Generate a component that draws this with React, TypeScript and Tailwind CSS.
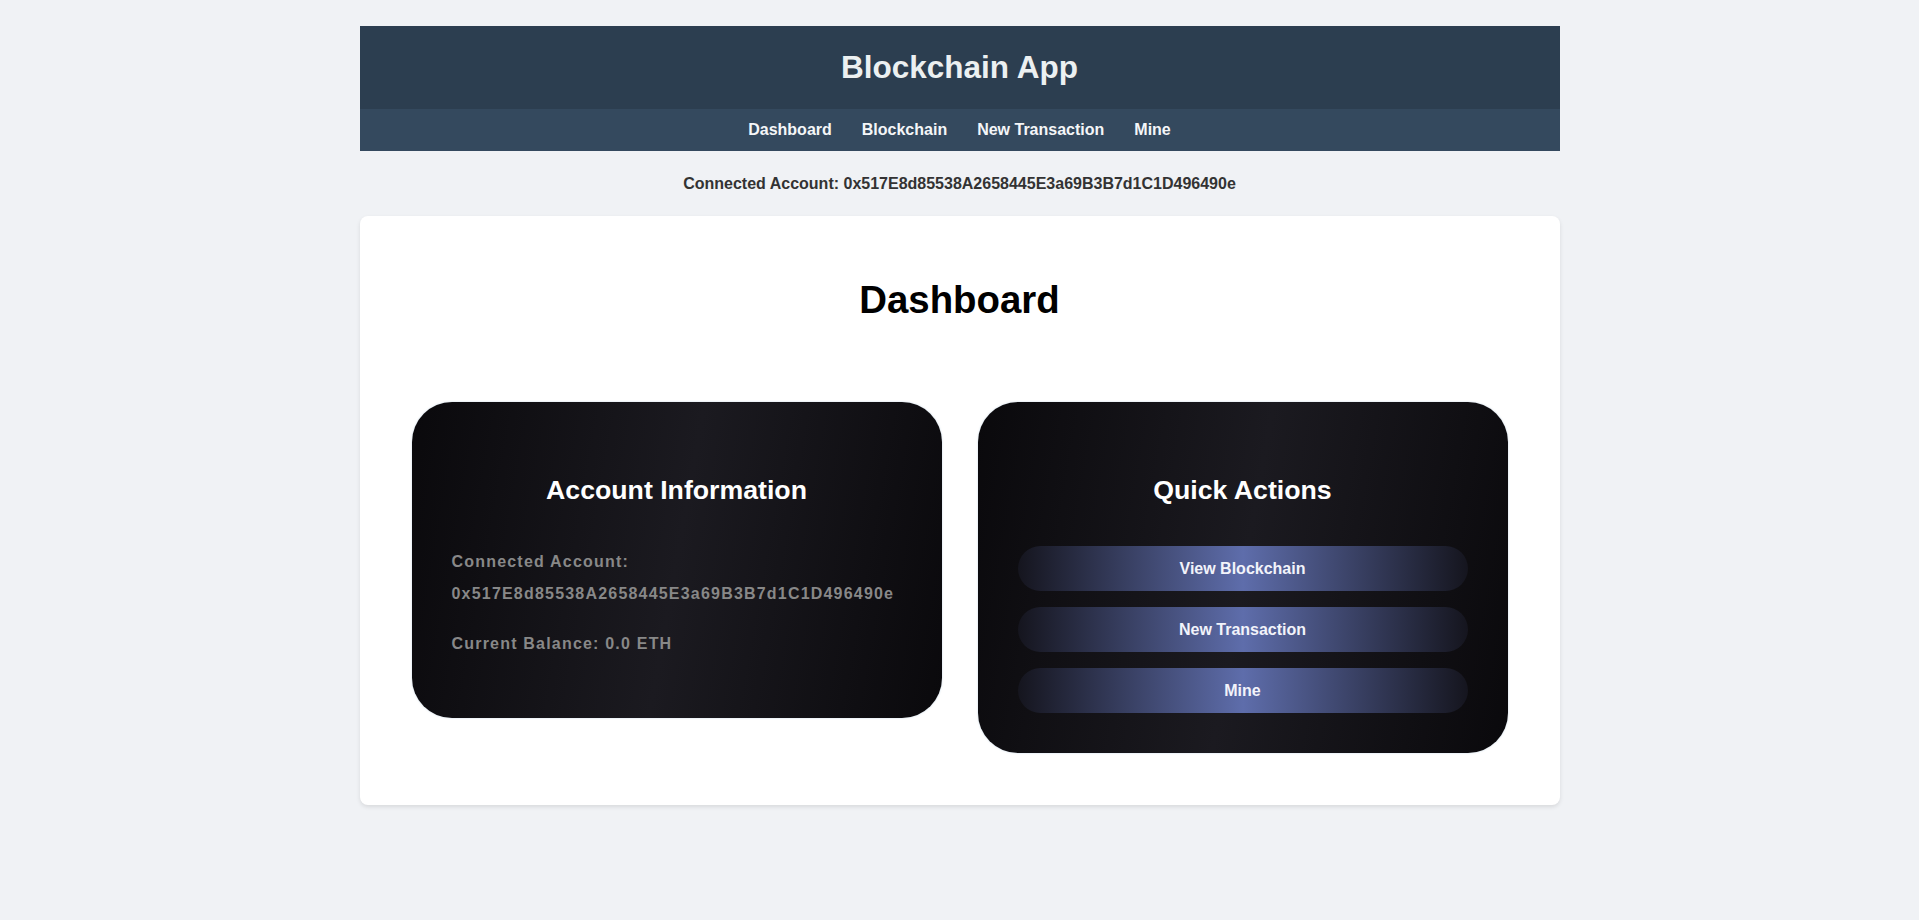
import React from "react";

const ADDRESS = "0x517E8d85538A2658445E3a69B3B7d1C1D496490e";

const cardBg =
  "bg-[linear-gradient(100deg,#0a090c_0%,#1b1a20_50%,#0a090c_100%)]";

const btnCls =
  "h-[45px] w-full rounded-[23px] bg-[linear-gradient(90deg,#15151e_0%,#5e6dab_50%,#15151e_100%)] text-[16px] font-bold text-[#f2f3fa] flex items-center justify-center";

export default function App() {
  return (
    <div
      className="min-h-[920px] w-full bg-[#f0f2f5] pt-[26px]"
      style={{ fontFamily: '"Liberation Sans", Arial, sans-serif' }}
    >
      <div className="mx-auto w-[1200px]">
        <header>
          <div className="flex h-[83px] items-center justify-center bg-[#2c3e50]">
            <h1 className="text-[31.5px] font-bold leading-[37px] text-[#ecf0f1]">
              Blockchain App
            </h1>
          </div>
          <nav className="flex h-[42px] items-center justify-center gap-[30px] bg-[#34495e] text-[16px] font-bold text-[#f4f6f8]">
            <span>Dashboard</span>
            <span>Blockchain</span>
            <span>New Transaction</span>
            <span>Mine</span>
          </nav>
        </header>

        <div className="flex h-[65px] items-center justify-center text-[16px] font-bold text-[#333]">
          Connected Account: {ADDRESS}
        </div>

        <main className="rounded-[8px] bg-white px-[52px] pb-[52px] pt-[61px] shadow-[0_2px_4px_rgba(0,0,0,0.1)]">
          <h2 className="mb-[79px] text-center text-[38.4px] font-bold leading-[46px] text-black">
            Dashboard
          </h2>

          <div className="grid grid-cols-2 items-start gap-[36px]">
            <section
              className={`${cardBg} rounded-[40px] px-[40px] pb-[58px] pt-[72px] shadow-[0_0_2px_rgba(70,130,180,0.35)]`}
            >
              <h3 className="text-center text-[26.7px] font-bold leading-[32px] text-white">
                Account Information
              </h3>
              <p className="mt-[40px] text-[16px] font-bold leading-[32px] tracking-[1.2px] text-[#888]">
                Connected Account:
                <br />
                {ADDRESS}
              </p>
              <p className="mt-[18px] text-[16px] font-bold leading-[32px] tracking-[1.2px] text-[#888]">
                Current Balance: 0.0 ETH
              </p>
            </section>

            <section
              className={`${cardBg} rounded-[40px] px-[40px] pb-[40px] pt-[72px] shadow-[0_0_2px_rgba(70,130,180,0.35)]`}
            >
              <h3 className="text-center text-[26.7px] font-bold leading-[32px] text-white">
                Quick Actions
              </h3>
              <div className="mt-[40px] flex flex-col gap-[16px]">
                <button className={btnCls}>View Blockchain</button>
                <button className={btnCls}>New Transaction</button>
                <button className={btnCls}>Mine</button>
              </div>
            </section>
          </div>
        </main>
      </div>
    </div>
  );
}
